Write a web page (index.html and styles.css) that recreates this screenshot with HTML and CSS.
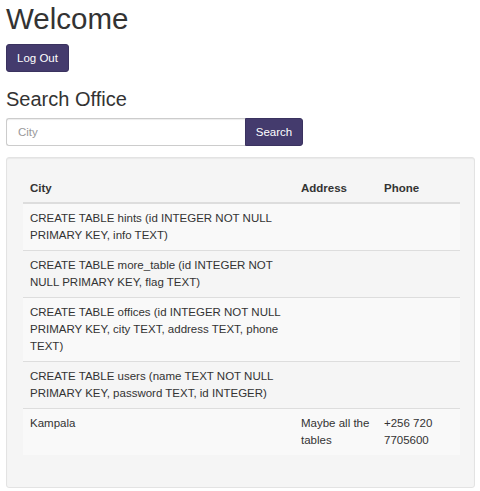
FILE: index.html
```html
<!DOCTYPE html>
<html lang="en">
<head>
<meta charset="utf-8">
<title>Welcome</title>
<link rel="stylesheet" href="styles.css">
</head>
<body>
<h1 class="title">Welcome</h1>
<button class="btn">Log Out</button>
<h3 class="subtitle">Search Office</h3>
<form class="search">
  <input class="search-input" type="text" placeholder="City">
  <button class="btn btn-search" type="button">Search</button>
</form>
<div class="well">
  <table class="table">
    <colgroup>
      <col class="col-city">
      <col class="col-addr">
      <col class="col-phone">
    </colgroup>
    <thead>
      <tr><th>City</th><th>Address</th><th>Phone</th></tr>
    </thead>
    <tbody>
      <tr class="odd"><td>CREATE TABLE hints (id INTEGER NOT NULL PRIMARY KEY, info TEXT)</td><td></td><td></td></tr>
      <tr><td>CREATE TABLE more_table (id INTEGER NOT NULL PRIMARY KEY, flag TEXT)</td><td></td><td></td></tr>
      <tr class="odd"><td>CREATE TABLE offices (id INTEGER NOT NULL PRIMARY KEY, city TEXT, address TEXT, phone TEXT)</td><td></td><td></td></tr>
      <tr><td>CREATE TABLE users (name TEXT NOT NULL PRIMARY KEY, password TEXT, id INTEGER)</td><td></td><td></td></tr>
      <tr class="odd"><td>Kampala</td><td>Maybe all the tables</td><td>+256 720 7705600</td></tr>
    </tbody>
  </table>
</div>
</body>
</html>
```

FILE: styles.css
```css
html, body {
  margin: 0;
  background: #fff;
}
body {
  padding: 0 5px 0 6px;
  font-family: "Liberation Sans", Arial, sans-serif;
  font-size: 11.5px;
  line-height: 17px;
  color: #333;
}
.title {
  font-size: 29.5px;
  line-height: 32px;
  font-weight: 400;
  margin: 3px 0 9px;
}
.btn {
  display: inline-block;
  font-family: inherit;
  font-size: 11.5px;
  line-height: 16px;
  padding: 5px 10px;
  border: 1px solid #3a325f;
  border-radius: 3px;
  background: #443b6d;
  color: #fff;
  cursor: pointer;
}
.subtitle {
  font-size: 20px;
  line-height: 21px;
  font-weight: 400;
  margin: 17px 0 8px;
}
.search {
  display: flex;
  width: 297px;
  margin: 0;
}
.search-input {
  flex: 1;
  min-width: 0;
  height: 28px;
  box-sizing: border-box;
  padding: 0 11px;
  border: 1px solid #ccc;
  border-right: none;
  border-radius: 3px 0 0 3px;
  font-family: inherit;
  font-size: 11.5px;
  color: #555;
  box-shadow: inset 0 1px 1px rgba(0,0,0,.075);
}
.search-input::placeholder {
  color: #999;
}
.btn-search {
  height: 28px;
  width: 58px;
  padding: 0;
  border-radius: 0 3px 3px 0;
}
.well {
  margin-top: 11px;
  padding: 16px 14px 16px 16px;
  background: #f5f5f5;
  border: 1px solid #e3e3e3;
  border-radius: 3px;
  box-shadow: inset 0 1px 1px rgba(0,0,0,.05);
}
.table {
  width: 100%;
  table-layout: fixed;
  border-collapse: collapse;
  border-spacing: 0;
  margin-bottom: 16px;
}
.col-city { width: 271px; }
.col-addr { width: 83px; }
.col-phone { width: 83px; }
.table th,
.table td {
  padding: 6px 7px;
  text-align: left;
  vertical-align: top;
  line-height: 17px;
}
.table th {
  font-weight: 700;
  border-bottom: 2px solid #ddd;
  vertical-align: bottom;
  padding-bottom: 5px;
}
.table td {
  border-top: 1px solid #ddd;
}
.table thead + tbody tr:first-child td {
  border-top: 0;
}
.table tr.odd td {
  background: #f9f9f9;
}
```
